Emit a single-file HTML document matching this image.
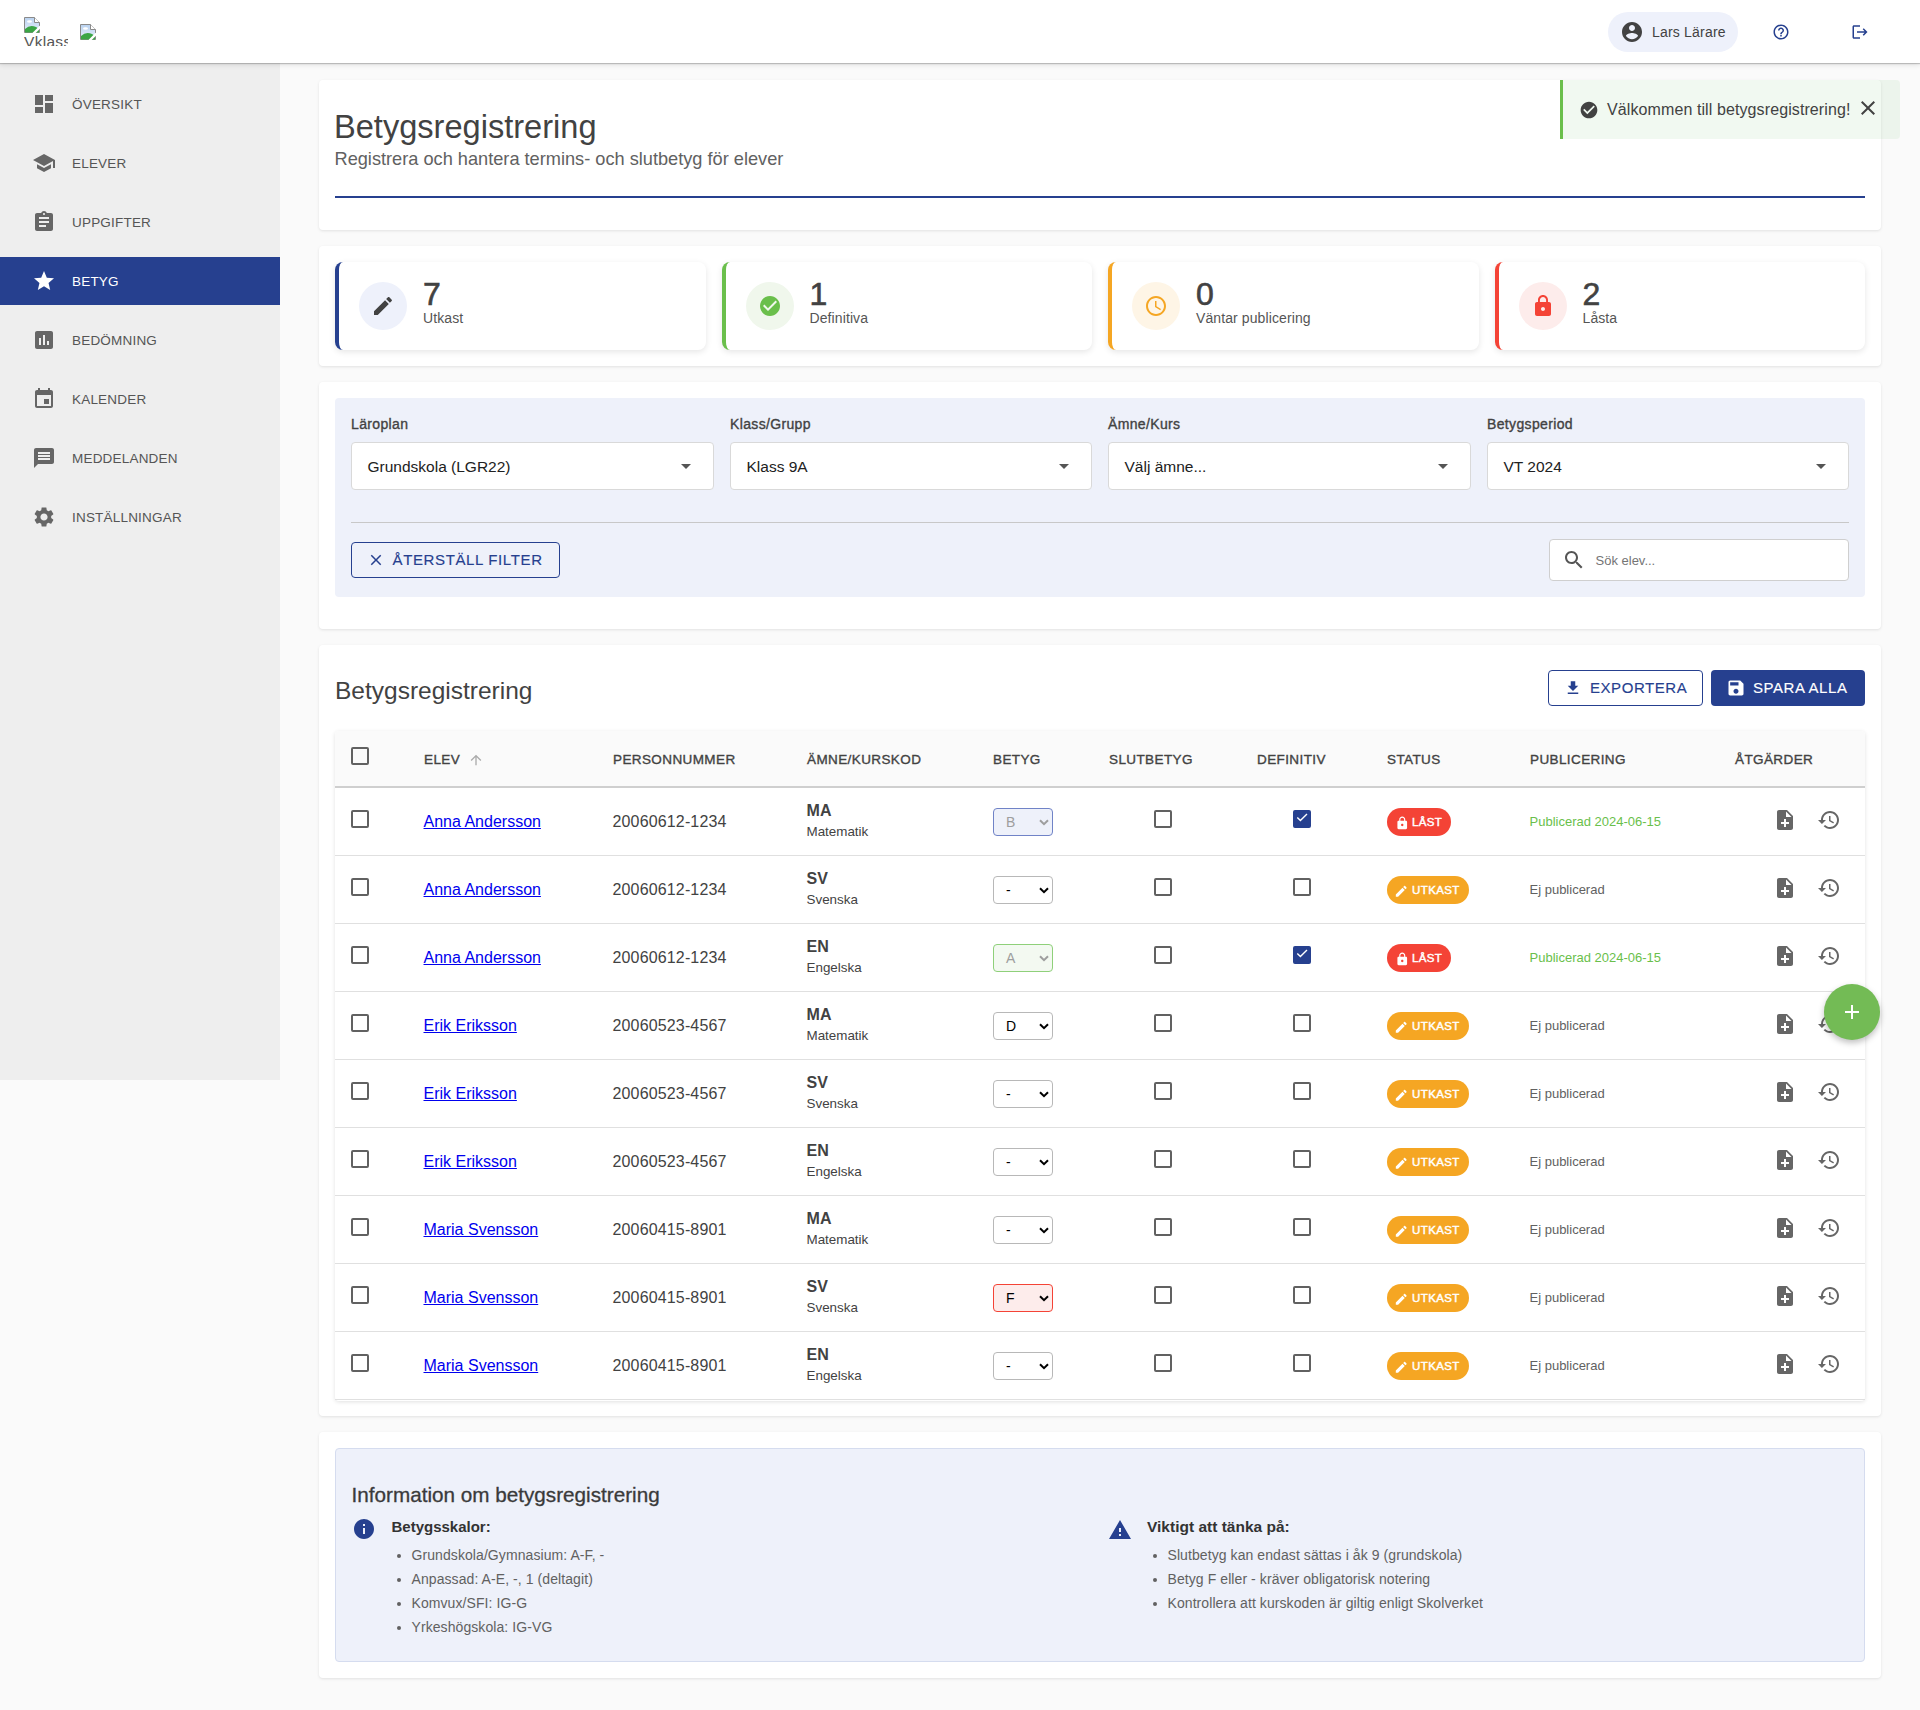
<!DOCTYPE html>
<html lang="sv"><head><meta charset="utf-8"><title>Betygsregistrering</title><style>
*{box-sizing:border-box;margin:0;padding:0}
html,body{width:1920px;height:1710px;overflow:hidden}
body{font-family:"Liberation Sans",sans-serif;background:#fafafa;color:#424242;position:relative}
.abs{position:absolute}
svg{display:block}
.t{position:absolute;white-space:nowrap}
.card{position:absolute;left:319px;width:1562px;background:#fff;border-radius:4px;box-shadow:0 1px 3px rgba(0,0,0,.10)}
.cb{position:absolute;width:18px;height:18px;border:2px solid #616161;border-radius:2px;background:#fff}
.cb.on{background:#26408f;border-color:#26408f}
</style></head><body>
<div class="abs" style="left:0px;top:0px;width:1920px;height:63px;background:#fff;box-shadow:0 1px 1px rgba(0,0,0,.2),0 2px 5px rgba(0,0,0,.1);z-index:1"></div>
<svg class="abs" style="left:24px;top:17px;z-index:2" width="16" height="16" viewBox="0 0 16 16"><defs><linearGradient id="sk" x1="0" y1="0" x2="0" y2="1"><stop offset="0" stop-color="#b9d2f0"/><stop offset="1" stop-color="#e6eefa"/></linearGradient></defs><path d="M0.5 0.5h10l5 5v10h-15z" fill="url(#sk)" stroke="#8a8a8a" stroke-width="1"/><path d="M10.5 0.5v5h5" fill="#fff" stroke="#8a8a8a" stroke-width="1"/><ellipse cx="5.5" cy="4.5" rx="2.5" ry="1.3" fill="#fff"/><path d="M1 15.5 V12 Q6 7 12 10 L15 12 V15.5z" fill="#3aa545"/><path d="M9.5 16.5 L16.5 9.5" stroke="#fff" stroke-width="2.4"/></svg>
<div class="abs" style="left:24px;top:33px;width:44px;height:13px;overflow:hidden;z-index:2"><div class="t" style="left:0;top:1px;font-size:15.5px;line-height:16px;color:#555;letter-spacing:0.3px">Vklass</div></div>
<svg class="abs" style="left:80px;top:24px;z-index:2" width="16" height="16" viewBox="0 0 16 16"><defs><linearGradient id="sk" x1="0" y1="0" x2="0" y2="1"><stop offset="0" stop-color="#b9d2f0"/><stop offset="1" stop-color="#e6eefa"/></linearGradient></defs><path d="M0.5 0.5h10l5 5v10h-15z" fill="url(#sk)" stroke="#8a8a8a" stroke-width="1"/><path d="M10.5 0.5v5h5" fill="#fff" stroke="#8a8a8a" stroke-width="1"/><ellipse cx="5.5" cy="4.5" rx="2.5" ry="1.3" fill="#fff"/><path d="M1 15.5 V12 Q6 7 12 10 L15 12 V15.5z" fill="#3aa545"/><path d="M9.5 16.5 L16.5 9.5" stroke="#fff" stroke-width="2.4"/></svg>
<div class="abs" style="left:1608px;top:12px;width:130px;height:40px;background:#eef1fb;border-radius:20px;z-index:2"></div>
<svg class="abs" style="left:1620px;top:20px;z-index:3" width="24" height="24" viewBox="0 0 24 24"><path fill="#424242" d="M12 2C6.48 2 2 6.48 2 12s4.48 10 10 10 10-4.48 10-10S17.52 2 12 2zm0 3c1.66 0 3 1.34 3 3s-1.34 3-3 3-3-1.34-3-3 1.34-3 3-3zm0 14.2c-2.5 0-4.71-1.28-6-3.22.03-1.99 4-3.08 6-3.08 1.99 0 5.970 1.09 6 3.08-1.29 1.94-3.5 3.22-6 3.22z"/></svg>
<div class="t" style="left:1652px;top:25.00px;font-size:14px;line-height:14px;color:#424242;letter-spacing:0.2px;z-index:3">Lars Lärare</div>
<svg class="abs" style="left:1771.6px;top:22.6px;z-index:3" width="18" height="18" viewBox="0 0 24 24"><path fill="#26408f" d="M11 18h2v-2h-2v2zm1-16C6.48 2 2 6.48 2 12s4.48 10 10 10 10-4.48 10-10S17.52 2 12 2zm0 18c-4.41 0-8-3.59-8-8s3.59-8 8-8 8 3.59 8 8-3.59 8-8 8zm0-14c-2.21 0-4 1.79-4 4h2c0-1.1.9-2 2-2s2 .9 2 2c0 2-3 1.75-3 5h2c0-2.25 3-2.5 3-5 0-2.21-1.79-4-4-4z"/></svg>
<svg class="abs" style="left:1850.7px;top:22.75px;z-index:3" width="18" height="18" viewBox="0 0 24 24"><path fill="#26408f" d="M17 7l-1.41 1.41L18.17 11H8v2h10.17l-2.58 2.58L17 17l5-5zM4 5h8V3H4c-1.1 0-2 .9-2 2v14c0 1.1.9 2 2 2h8v-2H4V5z"/></svg>
<div class="abs" style="left:0px;top:63px;width:280px;height:1017px;background:#eeeeee"></div>
<svg class="abs" style="left:32px;top:92px" width="24" height="24" viewBox="0 0 24 24"><path fill="#666" d="M3 13h8V3H3v10zm0 8h8v-6H3v6zm10 0h8V11h-8v10zm0-18v6h8V3h-8z"/></svg>
<div class="t" style="left:72px;top:98.00px;font-size:13.5px;line-height:13.5px;color:#555;letter-spacing:0.2px">ÖVERSIKT</div>
<svg class="abs" style="left:32px;top:151px" width="24" height="24" viewBox="0 0 24 24"><path fill="#666" d="M5 13.18v4L12 21l7-3.82v-4L12 17l-7-3.82zM12 3L1 9l11 6 9-4.91V17h2V9L12 3z"/></svg>
<div class="t" style="left:72px;top:157.00px;font-size:13.5px;line-height:13.5px;color:#555;letter-spacing:0.2px">ELEVER</div>
<svg class="abs" style="left:32px;top:210px" width="24" height="24" viewBox="0 0 24 24"><path fill="#666" d="M19 3h-4.18C14.4 1.84 13.3 1 12 1c-1.3 0-2.4.84-2.82 2H5c-1.1 0-2 .9-2 2v14c0 1.1.9 2 2 2h14c1.1 0 2-.9 2-2V5c0-1.1-.9-2-2-2zm-7 0c.55 0 1 .45 1 1s-.45 1-1 1-1-.45-1-1 .45-1 1-1zm2 14H7v-2h7v2zm3-4H7v-2h10v2zm0-4H7V7h10v2z"/></svg>
<div class="t" style="left:72px;top:216.00px;font-size:13.5px;line-height:13.5px;color:#555;letter-spacing:0.2px">UPPGIFTER</div>
<div class="abs" style="left:0px;top:257px;width:280px;height:48px;background:#26408f"></div>
<svg class="abs" style="left:32px;top:269px" width="24" height="24" viewBox="0 0 24 24"><path fill="#fff" d="M12 17.27L18.18 21l-1.64-7.03L22 9.24l-7.19-.61L12 2 9.19 8.63 2 9.24l5.46 4.73L5.82 21z"/></svg>
<div class="t" style="left:72px;top:275.00px;font-size:13.5px;line-height:13.5px;color:#fff;letter-spacing:0.2px">BETYG</div>
<svg class="abs" style="left:32px;top:328px" width="24" height="24" viewBox="0 0 24 24"><path fill="#666" d="M19 3H5c-1.1 0-2 .9-2 2v14c0 1.1.9 2 2 2h14c1.1 0 2-.9 2-2V5c0-1.1-.9-2-2-2zM9 17H7v-7h2v7zm4 0h-2V7h2v10zm4 0h-2v-4h2v4z"/></svg>
<div class="t" style="left:72px;top:334.00px;font-size:13.5px;line-height:13.5px;color:#555;letter-spacing:0.2px">BEDÖMNING</div>
<svg class="abs" style="left:32px;top:387px" width="24" height="24" viewBox="0 0 24 24"><path fill="#666" d="M17 12h-5v5h5v-5zM16 1v2H8V1H6v2H5c-1.11 0-1.99.9-1.99 2L3 19c0 1.1.89 2 2 2h14c1.1 0 2-.9 2-2V5c0-1.1-.9-2-2-2h-1V1h-2zm3 18H5V8h14v11z"/></svg>
<div class="t" style="left:72px;top:393.00px;font-size:13.5px;line-height:13.5px;color:#555;letter-spacing:0.2px">KALENDER</div>
<svg class="abs" style="left:32px;top:446px" width="24" height="24" viewBox="0 0 24 24"><path fill="#666" d="M20 2H4c-1.1 0-1.99.9-1.99 2L2 22l4-4h14c1.1 0 2-.9 2-2V4c0-1.1-.9-2-2-2zm-2 12H6v-2h12v2zm0-3H6V9h12v2zm0-3H6V6h12v2z"/></svg>
<div class="t" style="left:72px;top:452.00px;font-size:13.5px;line-height:13.5px;color:#555;letter-spacing:0.2px">MEDDELANDEN</div>
<svg class="abs" style="left:32px;top:505px" width="24" height="24" viewBox="0 0 24 24"><path fill="#666" d="M19.14 12.94c.04-.3.06-.61.06-.94 0-.32-.02-.64-.07-.94l2.03-1.58c.18-.14.23-.41.12-.61l-1.92-3.32c-.12-.22-.37-.29-.59-.22l-2.39.96c-.5-.38-1.03-.7-1.62-.94l-.36-2.54c-.04-.24-.24-.41-.48-.41h-3.84c-.24 0-.43.17-.47.41l-.36 2.54c-.59.24-1.13.57-1.62.94l-2.39-.96c-.22-.08-.47 0-.59.22L2.74 8.87c-.12.21-.08.47.12.61l2.03 1.58c-.05.3-.09.63-.09.94s.02.64.07.94l-2.030 1.58c-.18.14-.23.41-.12.61l1.92 3.32c.12.22.37.29.59.22l2.39-.96c.5.38 1.03.7 1.62.94l.36 2.54c.05.24.24.41.48.41h3.84c.24 0 .44-.17.47-.41l.36-2.54c.59-.24 1.13-.56 1.62-.94l2.39.96c.22.08.47 0 .59-.22l1.92-3.32c.12-.22.07-.47-.12-.61l-2.01-1.58zM12 15.6c-1.98 0-3.6-1.62-3.6-3.6s1.62-3.6 3.6-3.6 3.6 1.62 3.6 3.6-1.62 3.6-3.6 3.6z"/></svg>
<div class="t" style="left:72px;top:511.00px;font-size:13.5px;line-height:13.5px;color:#555;letter-spacing:0.2px">INSTÄLLNINGAR</div>
<div class="card" style="top:80px;height:150px"></div>
<div class="t" style="left:334px;top:111.00px;font-size:32.6px;line-height:32.6px;color:#424242">Betygsregistrering</div>
<div class="t" style="left:334.5px;top:150.00px;font-size:18.2px;line-height:18.2px;color:#616161">Registrera och hantera termins- och slutbetyg för elever</div>
<div class="abs" style="left:335px;top:196px;width:1530px;height:2px;background:#26408f"></div>
<div class="abs" style="left:1560px;top:80px;width:340px;height:59px;background:rgba(76,175,80,.08);border-left:3px solid #6abf4b;border-radius:0 4px 4px 0;z-index:6"></div>
<svg class="abs" style="left:1579px;top:100px;z-index:7" width="20" height="20" viewBox="0 0 24 24"><path fill="#424242" d="M12 2C6.48 2 2 6.48 2 12s4.48 10 10 10 10-4.48 10-10S17.52 2 12 2zm-2 15l-5-5 1.41-1.41L10 14.17l7.59-7.59L19 8l-9 9z"/></svg>
<div class="t" style="left:1607px;top:102.00px;font-size:16px;line-height:16px;color:#424242;letter-spacing:0.1px;z-index:7">Välkommen till betygsregistrering!</div>
<svg class="abs" style="left:1856px;top:96.4px;z-index:7" width="24" height="24" viewBox="0 0 24 24"><path fill="#424242" d="M19 6.41L17.59 5 12 10.59 6.41 5 5 6.41 10.59 12 5 17.59 6.41 19 12 13.41 17.59 19 19 17.59 13.41 12z"/></svg>
<div class="card" style="top:246px;height:120px"></div>
<div class="abs" style="left:335px;top:262px;width:370.5px;height:88px;background:#fff;border-radius:8px;border-left:4px solid #26408f;box-shadow:0 2px 6px rgba(0,0,0,.10)"></div>
<div class="abs" style="left:359px;top:282px;width:48px;height:48px;background:#eef1fb;border-radius:50%"></div>
<svg class="abs" style="left:371px;top:294px" width="24" height="24" viewBox="0 0 24 24"><path fill="#424242" d="M3 17.25V21h3.75L17.81 9.94l-3.75-3.75L3 17.25zM20.71 7.04c.39-.39.39-1.02 0-1.41l-2.34-2.34c-.39-.39-1.02-.39-1.41 0l-1.83 1.830 3.75 3.75 1.83-1.83z"/></svg>
<div class="t" style="left:423px;top:278.00px;font-size:32px;line-height:32px;color:#424242;-webkit-text-stroke:0.6px #424242">7</div>
<div class="t" style="left:423px;top:311.00px;font-size:14px;line-height:14px;color:#555;letter-spacing:0.1px">Utkast</div>
<div class="abs" style="left:721.5px;top:262px;width:370.5px;height:88px;background:#fff;border-radius:8px;border-left:4px solid #6abf4b;box-shadow:0 2px 6px rgba(0,0,0,.10)"></div>
<div class="abs" style="left:745.5px;top:282px;width:48px;height:48px;background:#f0f7ec;border-radius:50%"></div>
<svg class="abs" style="left:757.5px;top:294px" width="24" height="24" viewBox="0 0 24 24"><path fill="#6abf4b" d="M12 2C6.48 2 2 6.48 2 12s4.48 10 10 10 10-4.48 10-10S17.52 2 12 2zm-2 15l-5-5 1.41-1.41L10 14.17l7.59-7.59L19 8l-9 9z"/></svg>
<div class="t" style="left:809.5px;top:278.00px;font-size:32px;line-height:32px;color:#424242;-webkit-text-stroke:0.6px #424242">1</div>
<div class="t" style="left:809.5px;top:311.00px;font-size:14px;line-height:14px;color:#555;letter-spacing:0.1px">Definitiva</div>
<div class="abs" style="left:1108px;top:262px;width:370.5px;height:88px;background:#fff;border-radius:8px;border-left:4px solid #f5a623;box-shadow:0 2px 6px rgba(0,0,0,.10)"></div>
<div class="abs" style="left:1132px;top:282px;width:48px;height:48px;background:#fef5e6;border-radius:50%"></div>
<svg class="abs" style="left:1144px;top:294px" width="24" height="24" viewBox="0 0 24 24"><path fill="#f5a623" d="M11.99 2C6.47 2 2 6.48 2 12s4.47 10 9.99 10C17.52 22 22 17.52 22 12S17.52 2 11.99 2zM12 20c-4.42 0-8-3.58-8-8s3.58-8 8-8 8 3.58 8 8-3.58 8-8 8zm.5-13H11v6l5.25 3.15.75-1.23-4.5-2.67z"/></svg>
<div class="t" style="left:1196px;top:278.00px;font-size:32px;line-height:32px;color:#424242;-webkit-text-stroke:0.6px #424242">0</div>
<div class="t" style="left:1196px;top:311.00px;font-size:14px;line-height:14px;color:#555;letter-spacing:0.1px">Väntar publicering</div>
<div class="abs" style="left:1494.5px;top:262px;width:370.5px;height:88px;background:#fff;border-radius:8px;border-left:4px solid #f44336;box-shadow:0 2px 6px rgba(0,0,0,.10)"></div>
<div class="abs" style="left:1518.5px;top:282px;width:48px;height:48px;background:#fdeceb;border-radius:50%"></div>
<svg class="abs" style="left:1530.5px;top:294px" width="24" height="24" viewBox="0 0 24 24"><path fill="#f44336" d="M18 8h-1V6c0-2.76-2.24-5-5-5S7 3.24 7 6v2H6c-1.1 0-2 .9-2 2v10c0 1.1.9 2 2 2h12c1.1 0 2-.9 2-2V10c0-1.1-.9-2-2-2zm-6 9c-1.1 0-2-.9-2-2s.9-2 2-2 2 .9 2 2-.9 2-2 2zm3.1-9H8.9V6c0-1.71 1.39-3.1 3.1-3.1 1.71 0 3.1 1.39 3.1 3.1v2z"/></svg>
<div class="t" style="left:1582.5px;top:278.00px;font-size:32px;line-height:32px;color:#424242;-webkit-text-stroke:0.6px #424242">2</div>
<div class="t" style="left:1582.5px;top:311.00px;font-size:14px;line-height:14px;color:#555;letter-spacing:0.1px">Låsta</div>
<div class="card" style="top:382px;height:247px"></div>
<div class="abs" style="left:335px;top:398px;width:1530px;height:199px;background:#eef1fa;border-radius:4px"></div>
<div class="t" style="left:351px;top:417.00px;font-size:14px;line-height:14px;color:#424242;letter-spacing:0.35px;-webkit-text-stroke:0.35px #424242">Läroplan</div>
<div class="abs" style="left:351px;top:442px;width:363px;height:48px;background:#fff;border:1px solid #d9d9d9;border-radius:4px"></div>
<div class="t" style="left:367.5px;top:459.00px;font-size:15.5px;line-height:15.5px;color:#212121">Grundskola (LGR22)</div>
<svg class="abs" style="left:674px;top:454px" width="24" height="24" viewBox="0 0 24 24"><path fill="#555" d="M7 10l5 5 5-5z"/></svg>
<div class="t" style="left:730px;top:417.00px;font-size:14px;line-height:14px;color:#424242;letter-spacing:0.35px;-webkit-text-stroke:0.35px #424242">Klass/Grupp</div>
<div class="abs" style="left:730px;top:442px;width:362px;height:48px;background:#fff;border:1px solid #d9d9d9;border-radius:4px"></div>
<div class="t" style="left:746.5px;top:459.00px;font-size:15.5px;line-height:15.5px;color:#212121">Klass 9A</div>
<svg class="abs" style="left:1052px;top:454px" width="24" height="24" viewBox="0 0 24 24"><path fill="#555" d="M7 10l5 5 5-5z"/></svg>
<div class="t" style="left:1108px;top:417.00px;font-size:14px;line-height:14px;color:#424242;letter-spacing:0.35px;-webkit-text-stroke:0.35px #424242">Ämne/Kurs</div>
<div class="abs" style="left:1108px;top:442px;width:363px;height:48px;background:#fff;border:1px solid #d9d9d9;border-radius:4px"></div>
<div class="t" style="left:1124.5px;top:459.00px;font-size:15.5px;line-height:15.5px;color:#212121">Välj ämne...</div>
<svg class="abs" style="left:1431px;top:454px" width="24" height="24" viewBox="0 0 24 24"><path fill="#555" d="M7 10l5 5 5-5z"/></svg>
<div class="t" style="left:1487px;top:417.00px;font-size:14px;line-height:14px;color:#424242;letter-spacing:0.35px;-webkit-text-stroke:0.35px #424242">Betygsperiod</div>
<div class="abs" style="left:1487px;top:442px;width:362px;height:48px;background:#fff;border:1px solid #d9d9d9;border-radius:4px"></div>
<div class="t" style="left:1503.5px;top:459.00px;font-size:15.5px;line-height:15.5px;color:#212121">VT 2024</div>
<svg class="abs" style="left:1809px;top:454px" width="24" height="24" viewBox="0 0 24 24"><path fill="#555" d="M7 10l5 5 5-5z"/></svg>
<div class="abs" style="left:351px;top:522px;width:1498px;height:1px;background:#c8c8c8"></div>
<div class="abs" style="left:351px;top:542px;width:209px;height:36px;border:1px solid #26408f;border-radius:4px"></div>
<svg class="abs" style="left:367px;top:551px" width="18" height="18" viewBox="0 0 24 24"><path fill="#26408f" d="M19 6.41L17.59 5 12 10.59 6.41 5 5 6.41 10.59 12 5 17.59 6.41 19 12 13.41 17.59 19 19 17.59 13.41 12z"/></svg>
<div class="t" style="left:392.5px;top:552.00px;font-size:15px;line-height:15px;color:#26408f;letter-spacing:0.63px;-webkit-text-stroke:0.15px #26408f">ÅTERSTÄLL FILTER</div>
<div class="abs" style="left:1549px;top:539px;width:300px;height:42px;background:#fff;border:1px solid #cfcfcf;border-radius:4px"></div>
<svg class="abs" style="left:1562px;top:548px" width="24" height="24" viewBox="0 0 24 24"><path fill="#555" d="M15.5 14h-.79l-.28-.27C15.41 12.59 16 11.11 16 9.5 16 5.91 13.09 3 9.5 3S3 5.91 3 9.5 5.91 16 9.5 16c1.61 0 3.09-.59 4.23-1.57l.27.28v.79l5 4.99L20.49 19l-4.99-5zm-6 0C7.01 14 5 11.99 5 9.5S7.01 5 9.5 5 14 7.01 14 9.5 11.990 14 9.5 14z"/></svg>
<div class="t" style="left:1595.5px;top:554.00px;font-size:13px;line-height:13px;color:#757575">Sök elev...</div>
<div class="card" style="top:645px;height:771px"></div>
<div class="t" style="left:335px;top:679.00px;font-size:24.5px;line-height:24.5px;color:#424242">Betygsregistrering</div>
<div class="abs" style="left:1548px;top:670px;width:155px;height:36px;border:1px solid #26408f;border-radius:4px"></div>
<svg class="abs" style="left:1564px;top:679px" width="18" height="18" viewBox="0 0 24 24"><path fill="#26408f" d="M19 9h-4V3H9v6H5l7 7 7-7zM5 18v2h14v-2H5z"/></svg>
<div class="t" style="left:1590px;top:680.00px;font-size:15px;line-height:15px;color:#26408f;letter-spacing:0.55px;-webkit-text-stroke:0.15px #26408f">EXPORTERA</div>
<div class="abs" style="left:1711px;top:670px;width:154px;height:36px;background:#26408f;border-radius:4px"></div>
<svg class="abs" style="left:1726px;top:678px" width="20" height="20" viewBox="0 0 24 24"><path fill="#fff" d="M17 3H5c-1.11 0-2 .9-2 2v14c0 1.1.89 2 2 2h14c1.1 0 2-.9 2-2V7l-4-4zm-5 16c-1.66 0-3-1.34-3-3s1.34-3 3-3 3 1.34 3 3-1.34 3-3 3zm3-10H5V5h10v4z"/></svg>
<div class="t" style="left:1753px;top:680.00px;font-size:15px;line-height:15px;color:#fff;letter-spacing:0.55px;-webkit-text-stroke:0.15px #fff">SPARA ALLA</div>
<div class="abs" style="left:335px;top:731px;width:1530px;height:670px;background:#fff;border-radius:4px;box-shadow:0 1px 4px rgba(0,0,0,.12)"></div>
<div class="abs" style="left:335px;top:731px;width:1530px;height:57px;background:#fafafa;border-bottom:2px solid #cfcfcf;border-radius:4px 4px 0 0"></div>
<div class="cb" style="left:351px;top:747px;background:transparent"></div>
<div class="t" style="left:424px;top:753.00px;font-size:13.5px;line-height:13.5px;color:#424242;letter-spacing:0.4px;-webkit-text-stroke:0.35px #424242">ELEV</div>
<div class="t" style="left:613px;top:753.00px;font-size:13.5px;line-height:13.5px;color:#424242;letter-spacing:0.4px;-webkit-text-stroke:0.35px #424242">PERSONNUMMER</div>
<div class="t" style="left:807px;top:753.00px;font-size:13.5px;line-height:13.5px;color:#424242;letter-spacing:0.4px;-webkit-text-stroke:0.35px #424242">ÄMNE/KURSKOD</div>
<div class="t" style="left:993px;top:753.00px;font-size:13.5px;line-height:13.5px;color:#424242;letter-spacing:0.4px;-webkit-text-stroke:0.35px #424242">BETYG</div>
<div class="t" style="left:1109px;top:753.00px;font-size:13.5px;line-height:13.5px;color:#424242;letter-spacing:0.4px;-webkit-text-stroke:0.35px #424242">SLUTBETYG</div>
<div class="t" style="left:1257px;top:753.00px;font-size:13.5px;line-height:13.5px;color:#424242;letter-spacing:0.4px;-webkit-text-stroke:0.35px #424242">DEFINITIV</div>
<div class="t" style="left:1387px;top:753.00px;font-size:13.5px;line-height:13.5px;color:#424242;letter-spacing:0.4px;-webkit-text-stroke:0.35px #424242">STATUS</div>
<div class="t" style="left:1530px;top:753.00px;font-size:13.5px;line-height:13.5px;color:#424242;letter-spacing:0.4px;-webkit-text-stroke:0.35px #424242">PUBLICERING</div>
<div class="t" style="left:1735px;top:753.00px;font-size:13.5px;line-height:13.5px;color:#424242;letter-spacing:0.4px;-webkit-text-stroke:0.35px #424242">ÅTGÄRDER</div>
<svg class="abs" style="left:468px;top:752px" width="16" height="16" viewBox="0 0 24 24"><path fill="#ababab" d="M4 12l1.41 1.41L11 7.83V20h2V7.83l5.58 5.59L20 12l-8-8-8 8z"/></svg>
<div class="abs" style="left:335px;top:855px;width:1530px;height:1px;background:#e0e0e0"></div>
<div class="cb" style="left:351px;top:810px"></div>
<div class="t" style="left:423.5px;top:814.00px;font-size:16px;line-height:16px;color:#0000ee;text-decoration:underline">Anna Andersson</div>
<div class="t" style="left:612.5px;top:814.00px;font-size:16px;line-height:16px;color:#424242;letter-spacing:0.15px">20060612-1234</div>
<div class="t" style="left:806.5px;top:803.00px;font-size:16px;line-height:16px;color:#424242;font-weight:bold;letter-spacing:0.1px">MA</div>
<div class="t" style="left:806.5px;top:825.00px;font-size:13.4px;line-height:13.4px;color:#424242">Matematik</div>
<div class="abs" style="left:993px;top:808px;width:60px;height:28px;background:#eef1fa;border:1px solid #7083c7;border-radius:4px"></div>
<div class="t" style="left:1006px;top:815.00px;font-size:14px;line-height:14px;color:#9e9e9e">B</div>
<svg class="abs" style="left:1039px;top:819px" width="10" height="7" viewBox="0 0 10 7"><path d="M1 1.2 L5 5.2 L9 1.2" fill="none" stroke="#9e9e9e" stroke-width="2"/></svg>
<div class="cb" style="left:1154px;top:810px"></div>
<div class="cb on" style="left:1293px;top:810px"><svg class="abs" style="left:1px;top:1px" width="12" height="12" viewBox="0 0 12 12"><path d="M1.3 4.5 L4.4 7.6 L11 1" fill="none" stroke="#fff" stroke-width="1.4"/></svg></div>
<div class="abs" style="left:1387px;top:808px;width:64px;height:28px;background:#f44336;border-radius:14px"></div>
<svg class="abs" style="left:1394.5px;top:815.5px" width="14.5" height="14.5" viewBox="0 0 24 24"><path fill="#fff" d="M18 8h-1V6c0-2.76-2.24-5-5-5S7 3.24 7 6v2H6c-1.1 0-2 .9-2 2v10c0 1.1.9 2 2 2h12c1.1 0 2-.9 2-2V10c0-1.1-.9-2-2-2zm-6 9c-1.1 0-2-.9-2-2s.9-2 2-2 2 .9 2 2-.9 2-2 2zm3.1-9H8.9V6c0-1.71 1.39-3.1 3.1-3.1 1.71 0 3.1 1.39 3.1 3.1v2z"/></svg>
<div class="t" style="left:1412px;top:817.00px;font-size:11.5px;line-height:11.5px;color:#fff;letter-spacing:0.35px;-webkit-text-stroke:0.45px #fff">LÅST</div>
<div class="t" style="left:1529.5px;top:815.00px;font-size:13px;line-height:13px;color:#6abf4b">Publicerad 2024-06-15</div>
<svg class="abs" style="left:1773px;top:808px" width="24" height="24" viewBox="0 0 24 24"><path fill="#666" d="M14 2H6c-1.1 0-1.99.9-1.99 2L4 20c0 1.1.89 2 1.99 2H18c1.1 0 2-.9 2-2V8l-6-6zm2 14h-3v3h-2v-3H8v-2h3v-3h2v3h3v2zm-3-7V3.5L18.5 9H13z"/></svg>
<svg class="abs" style="left:1817px;top:808px" width="24" height="24" viewBox="0 0 24 24"><path fill="#666" d="M13 3c-4.97 0-9 4.03-9 9H1l3.89 3.89.07.14L9 12H6c0-3.870 3.13-7 7-7s7 3.13 7 7-3.13 7-7 7c-1.93 0-3.68-.79-4.94-2.06l-1.42 1.42C8.27 19.99 10.51 21 13 21c4.97 0 9-4.03 9-9s-4.03-9-9-9zm-1 5v5l4.28 2.54.72-1.21-3.5-2.08V8H12z"/></svg>
<div class="abs" style="left:335px;top:923px;width:1530px;height:1px;background:#e0e0e0"></div>
<div class="cb" style="left:351px;top:878px"></div>
<div class="t" style="left:423.5px;top:882.00px;font-size:16px;line-height:16px;color:#0000ee;text-decoration:underline">Anna Andersson</div>
<div class="t" style="left:612.5px;top:882.00px;font-size:16px;line-height:16px;color:#424242;letter-spacing:0.15px">20060612-1234</div>
<div class="t" style="left:806.5px;top:871.00px;font-size:16px;line-height:16px;color:#424242;font-weight:bold;letter-spacing:0.1px">SV</div>
<div class="t" style="left:806.5px;top:893.00px;font-size:13.4px;line-height:13.4px;color:#424242">Svenska</div>
<div class="abs" style="left:993px;top:876px;width:60px;height:28px;background:#fff;border:1px solid #b8b8b8;border-radius:4px"></div>
<div class="t" style="left:1006px;top:883.00px;font-size:14px;line-height:14px;color:#000">-</div>
<svg class="abs" style="left:1039px;top:887px" width="10" height="7" viewBox="0 0 10 7"><path d="M1 1.2 L5 5.2 L9 1.2" fill="none" stroke="#000" stroke-width="2"/></svg>
<div class="cb" style="left:1154px;top:878px"></div>
<div class="cb" style="left:1293px;top:878px"></div>
<div class="abs" style="left:1387px;top:876px;width:82px;height:28px;background:#f5a623;border-radius:14px"></div>
<svg class="abs" style="left:1394.3px;top:884.1px" width="14.5" height="14.5" viewBox="0 0 24 24"><path fill="#fff" d="M3 17.25V21h3.75L17.81 9.94l-3.75-3.75L3 17.25zM20.71 7.04c.39-.39.39-1.02 0-1.41l-2.34-2.34c-.39-.39-1.02-.39-1.41 0l-1.83 1.830 3.75 3.75 1.83-1.83z"/></svg>
<div class="t" style="left:1412px;top:885.00px;font-size:11.5px;line-height:11.5px;color:#fff;letter-spacing:0.4px;-webkit-text-stroke:0.45px #fff">UTKAST</div>
<div class="t" style="left:1529.5px;top:883.00px;font-size:13px;line-height:13px;color:#616161">Ej publicerad</div>
<svg class="abs" style="left:1773px;top:876px" width="24" height="24" viewBox="0 0 24 24"><path fill="#666" d="M14 2H6c-1.1 0-1.99.9-1.99 2L4 20c0 1.1.89 2 1.99 2H18c1.1 0 2-.9 2-2V8l-6-6zm2 14h-3v3h-2v-3H8v-2h3v-3h2v3h3v2zm-3-7V3.5L18.5 9H13z"/></svg>
<svg class="abs" style="left:1817px;top:876px" width="24" height="24" viewBox="0 0 24 24"><path fill="#666" d="M13 3c-4.97 0-9 4.03-9 9H1l3.89 3.89.07.14L9 12H6c0-3.870 3.13-7 7-7s7 3.13 7 7-3.13 7-7 7c-1.93 0-3.68-.79-4.94-2.06l-1.42 1.42C8.27 19.99 10.51 21 13 21c4.97 0 9-4.03 9-9s-4.03-9-9-9zm-1 5v5l4.28 2.54.72-1.21-3.5-2.08V8H12z"/></svg>
<div class="abs" style="left:335px;top:991px;width:1530px;height:1px;background:#e0e0e0"></div>
<div class="cb" style="left:351px;top:946px"></div>
<div class="t" style="left:423.5px;top:950.00px;font-size:16px;line-height:16px;color:#0000ee;text-decoration:underline">Anna Andersson</div>
<div class="t" style="left:612.5px;top:950.00px;font-size:16px;line-height:16px;color:#424242;letter-spacing:0.15px">20060612-1234</div>
<div class="t" style="left:806.5px;top:939.00px;font-size:16px;line-height:16px;color:#424242;font-weight:bold;letter-spacing:0.1px">EN</div>
<div class="t" style="left:806.5px;top:961.00px;font-size:13.4px;line-height:13.4px;color:#424242">Engelska</div>
<div class="abs" style="left:993px;top:944px;width:60px;height:28px;background:#f3f9f1;border:1px solid #8fd07a;border-radius:4px"></div>
<div class="t" style="left:1006px;top:951.00px;font-size:14px;line-height:14px;color:#9e9e9e">A</div>
<svg class="abs" style="left:1039px;top:955px" width="10" height="7" viewBox="0 0 10 7"><path d="M1 1.2 L5 5.2 L9 1.2" fill="none" stroke="#9e9e9e" stroke-width="2"/></svg>
<div class="cb" style="left:1154px;top:946px"></div>
<div class="cb on" style="left:1293px;top:946px"><svg class="abs" style="left:1px;top:1px" width="12" height="12" viewBox="0 0 12 12"><path d="M1.3 4.5 L4.4 7.6 L11 1" fill="none" stroke="#fff" stroke-width="1.4"/></svg></div>
<div class="abs" style="left:1387px;top:944px;width:64px;height:28px;background:#f44336;border-radius:14px"></div>
<svg class="abs" style="left:1394.5px;top:951.5px" width="14.5" height="14.5" viewBox="0 0 24 24"><path fill="#fff" d="M18 8h-1V6c0-2.76-2.24-5-5-5S7 3.24 7 6v2H6c-1.1 0-2 .9-2 2v10c0 1.1.9 2 2 2h12c1.1 0 2-.9 2-2V10c0-1.1-.9-2-2-2zm-6 9c-1.1 0-2-.9-2-2s.9-2 2-2 2 .9 2 2-.9 2-2 2zm3.1-9H8.9V6c0-1.71 1.39-3.1 3.1-3.1 1.71 0 3.1 1.39 3.1 3.1v2z"/></svg>
<div class="t" style="left:1412px;top:953.00px;font-size:11.5px;line-height:11.5px;color:#fff;letter-spacing:0.35px;-webkit-text-stroke:0.45px #fff">LÅST</div>
<div class="t" style="left:1529.5px;top:951.00px;font-size:13px;line-height:13px;color:#6abf4b">Publicerad 2024-06-15</div>
<svg class="abs" style="left:1773px;top:944px" width="24" height="24" viewBox="0 0 24 24"><path fill="#666" d="M14 2H6c-1.1 0-1.99.9-1.99 2L4 20c0 1.1.89 2 1.99 2H18c1.1 0 2-.9 2-2V8l-6-6zm2 14h-3v3h-2v-3H8v-2h3v-3h2v3h3v2zm-3-7V3.5L18.5 9H13z"/></svg>
<svg class="abs" style="left:1817px;top:944px" width="24" height="24" viewBox="0 0 24 24"><path fill="#666" d="M13 3c-4.97 0-9 4.03-9 9H1l3.89 3.89.07.14L9 12H6c0-3.870 3.13-7 7-7s7 3.13 7 7-3.13 7-7 7c-1.93 0-3.68-.79-4.94-2.06l-1.42 1.42C8.27 19.99 10.51 21 13 21c4.97 0 9-4.03 9-9s-4.03-9-9-9zm-1 5v5l4.28 2.54.72-1.21-3.5-2.08V8H12z"/></svg>
<div class="abs" style="left:335px;top:1059px;width:1530px;height:1px;background:#e0e0e0"></div>
<div class="cb" style="left:351px;top:1014px"></div>
<div class="t" style="left:423.5px;top:1018.00px;font-size:16px;line-height:16px;color:#0000ee;text-decoration:underline">Erik Eriksson</div>
<div class="t" style="left:612.5px;top:1018.00px;font-size:16px;line-height:16px;color:#424242;letter-spacing:0.15px">20060523-4567</div>
<div class="t" style="left:806.5px;top:1007.00px;font-size:16px;line-height:16px;color:#424242;font-weight:bold;letter-spacing:0.1px">MA</div>
<div class="t" style="left:806.5px;top:1029.00px;font-size:13.4px;line-height:13.4px;color:#424242">Matematik</div>
<div class="abs" style="left:993px;top:1012px;width:60px;height:28px;background:#fff;border:1px solid #b8b8b8;border-radius:4px"></div>
<div class="t" style="left:1006px;top:1019.00px;font-size:14px;line-height:14px;color:#000">D</div>
<svg class="abs" style="left:1039px;top:1023px" width="10" height="7" viewBox="0 0 10 7"><path d="M1 1.2 L5 5.2 L9 1.2" fill="none" stroke="#000" stroke-width="2"/></svg>
<div class="cb" style="left:1154px;top:1014px"></div>
<div class="cb" style="left:1293px;top:1014px"></div>
<div class="abs" style="left:1387px;top:1012px;width:82px;height:28px;background:#f5a623;border-radius:14px"></div>
<svg class="abs" style="left:1394.3px;top:1020.1px" width="14.5" height="14.5" viewBox="0 0 24 24"><path fill="#fff" d="M3 17.25V21h3.75L17.81 9.94l-3.75-3.75L3 17.25zM20.71 7.04c.39-.39.39-1.02 0-1.41l-2.34-2.34c-.39-.39-1.02-.39-1.41 0l-1.83 1.830 3.75 3.75 1.83-1.83z"/></svg>
<div class="t" style="left:1412px;top:1021.00px;font-size:11.5px;line-height:11.5px;color:#fff;letter-spacing:0.4px;-webkit-text-stroke:0.45px #fff">UTKAST</div>
<div class="t" style="left:1529.5px;top:1019.00px;font-size:13px;line-height:13px;color:#616161">Ej publicerad</div>
<svg class="abs" style="left:1773px;top:1012px" width="24" height="24" viewBox="0 0 24 24"><path fill="#666" d="M14 2H6c-1.1 0-1.99.9-1.99 2L4 20c0 1.1.89 2 1.99 2H18c1.1 0 2-.9 2-2V8l-6-6zm2 14h-3v3h-2v-3H8v-2h3v-3h2v3h3v2zm-3-7V3.5L18.5 9H13z"/></svg>
<svg class="abs" style="left:1817px;top:1012px" width="24" height="24" viewBox="0 0 24 24"><path fill="#666" d="M13 3c-4.97 0-9 4.03-9 9H1l3.89 3.89.07.14L9 12H6c0-3.870 3.13-7 7-7s7 3.13 7 7-3.13 7-7 7c-1.93 0-3.68-.79-4.94-2.06l-1.42 1.42C8.27 19.99 10.51 21 13 21c4.97 0 9-4.03 9-9s-4.03-9-9-9zm-1 5v5l4.28 2.54.72-1.21-3.5-2.08V8H12z"/></svg>
<div class="abs" style="left:335px;top:1127px;width:1530px;height:1px;background:#e0e0e0"></div>
<div class="cb" style="left:351px;top:1082px"></div>
<div class="t" style="left:423.5px;top:1086.00px;font-size:16px;line-height:16px;color:#0000ee;text-decoration:underline">Erik Eriksson</div>
<div class="t" style="left:612.5px;top:1086.00px;font-size:16px;line-height:16px;color:#424242;letter-spacing:0.15px">20060523-4567</div>
<div class="t" style="left:806.5px;top:1075.00px;font-size:16px;line-height:16px;color:#424242;font-weight:bold;letter-spacing:0.1px">SV</div>
<div class="t" style="left:806.5px;top:1097.00px;font-size:13.4px;line-height:13.4px;color:#424242">Svenska</div>
<div class="abs" style="left:993px;top:1080px;width:60px;height:28px;background:#fff;border:1px solid #b8b8b8;border-radius:4px"></div>
<div class="t" style="left:1006px;top:1087.00px;font-size:14px;line-height:14px;color:#000">-</div>
<svg class="abs" style="left:1039px;top:1091px" width="10" height="7" viewBox="0 0 10 7"><path d="M1 1.2 L5 5.2 L9 1.2" fill="none" stroke="#000" stroke-width="2"/></svg>
<div class="cb" style="left:1154px;top:1082px"></div>
<div class="cb" style="left:1293px;top:1082px"></div>
<div class="abs" style="left:1387px;top:1080px;width:82px;height:28px;background:#f5a623;border-radius:14px"></div>
<svg class="abs" style="left:1394.3px;top:1088.1px" width="14.5" height="14.5" viewBox="0 0 24 24"><path fill="#fff" d="M3 17.25V21h3.75L17.81 9.94l-3.75-3.75L3 17.25zM20.71 7.04c.39-.39.39-1.02 0-1.41l-2.34-2.34c-.39-.39-1.02-.39-1.41 0l-1.83 1.830 3.75 3.75 1.83-1.83z"/></svg>
<div class="t" style="left:1412px;top:1089.00px;font-size:11.5px;line-height:11.5px;color:#fff;letter-spacing:0.4px;-webkit-text-stroke:0.45px #fff">UTKAST</div>
<div class="t" style="left:1529.5px;top:1087.00px;font-size:13px;line-height:13px;color:#616161">Ej publicerad</div>
<svg class="abs" style="left:1773px;top:1080px" width="24" height="24" viewBox="0 0 24 24"><path fill="#666" d="M14 2H6c-1.1 0-1.99.9-1.99 2L4 20c0 1.1.89 2 1.99 2H18c1.1 0 2-.9 2-2V8l-6-6zm2 14h-3v3h-2v-3H8v-2h3v-3h2v3h3v2zm-3-7V3.5L18.5 9H13z"/></svg>
<svg class="abs" style="left:1817px;top:1080px" width="24" height="24" viewBox="0 0 24 24"><path fill="#666" d="M13 3c-4.97 0-9 4.03-9 9H1l3.89 3.89.07.14L9 12H6c0-3.870 3.13-7 7-7s7 3.13 7 7-3.13 7-7 7c-1.93 0-3.68-.79-4.94-2.06l-1.42 1.42C8.27 19.99 10.51 21 13 21c4.97 0 9-4.03 9-9s-4.03-9-9-9zm-1 5v5l4.28 2.54.72-1.21-3.5-2.08V8H12z"/></svg>
<div class="abs" style="left:335px;top:1195px;width:1530px;height:1px;background:#e0e0e0"></div>
<div class="cb" style="left:351px;top:1150px"></div>
<div class="t" style="left:423.5px;top:1154.00px;font-size:16px;line-height:16px;color:#0000ee;text-decoration:underline">Erik Eriksson</div>
<div class="t" style="left:612.5px;top:1154.00px;font-size:16px;line-height:16px;color:#424242;letter-spacing:0.15px">20060523-4567</div>
<div class="t" style="left:806.5px;top:1143.00px;font-size:16px;line-height:16px;color:#424242;font-weight:bold;letter-spacing:0.1px">EN</div>
<div class="t" style="left:806.5px;top:1165.00px;font-size:13.4px;line-height:13.4px;color:#424242">Engelska</div>
<div class="abs" style="left:993px;top:1148px;width:60px;height:28px;background:#fff;border:1px solid #b8b8b8;border-radius:4px"></div>
<div class="t" style="left:1006px;top:1155.00px;font-size:14px;line-height:14px;color:#000">-</div>
<svg class="abs" style="left:1039px;top:1159px" width="10" height="7" viewBox="0 0 10 7"><path d="M1 1.2 L5 5.2 L9 1.2" fill="none" stroke="#000" stroke-width="2"/></svg>
<div class="cb" style="left:1154px;top:1150px"></div>
<div class="cb" style="left:1293px;top:1150px"></div>
<div class="abs" style="left:1387px;top:1148px;width:82px;height:28px;background:#f5a623;border-radius:14px"></div>
<svg class="abs" style="left:1394.3px;top:1156.1px" width="14.5" height="14.5" viewBox="0 0 24 24"><path fill="#fff" d="M3 17.25V21h3.75L17.81 9.94l-3.75-3.75L3 17.25zM20.71 7.04c.39-.39.39-1.02 0-1.41l-2.34-2.34c-.39-.39-1.02-.39-1.41 0l-1.83 1.830 3.75 3.75 1.83-1.83z"/></svg>
<div class="t" style="left:1412px;top:1157.00px;font-size:11.5px;line-height:11.5px;color:#fff;letter-spacing:0.4px;-webkit-text-stroke:0.45px #fff">UTKAST</div>
<div class="t" style="left:1529.5px;top:1155.00px;font-size:13px;line-height:13px;color:#616161">Ej publicerad</div>
<svg class="abs" style="left:1773px;top:1148px" width="24" height="24" viewBox="0 0 24 24"><path fill="#666" d="M14 2H6c-1.1 0-1.99.9-1.99 2L4 20c0 1.1.89 2 1.99 2H18c1.1 0 2-.9 2-2V8l-6-6zm2 14h-3v3h-2v-3H8v-2h3v-3h2v3h3v2zm-3-7V3.5L18.5 9H13z"/></svg>
<svg class="abs" style="left:1817px;top:1148px" width="24" height="24" viewBox="0 0 24 24"><path fill="#666" d="M13 3c-4.97 0-9 4.03-9 9H1l3.89 3.89.07.14L9 12H6c0-3.870 3.13-7 7-7s7 3.13 7 7-3.13 7-7 7c-1.93 0-3.68-.79-4.94-2.06l-1.42 1.42C8.27 19.99 10.51 21 13 21c4.97 0 9-4.03 9-9s-4.03-9-9-9zm-1 5v5l4.28 2.54.72-1.21-3.5-2.08V8H12z"/></svg>
<div class="abs" style="left:335px;top:1263px;width:1530px;height:1px;background:#e0e0e0"></div>
<div class="cb" style="left:351px;top:1218px"></div>
<div class="t" style="left:423.5px;top:1222.00px;font-size:16px;line-height:16px;color:#0000ee;text-decoration:underline">Maria Svensson</div>
<div class="t" style="left:612.5px;top:1222.00px;font-size:16px;line-height:16px;color:#424242;letter-spacing:0.15px">20060415-8901</div>
<div class="t" style="left:806.5px;top:1211.00px;font-size:16px;line-height:16px;color:#424242;font-weight:bold;letter-spacing:0.1px">MA</div>
<div class="t" style="left:806.5px;top:1233.00px;font-size:13.4px;line-height:13.4px;color:#424242">Matematik</div>
<div class="abs" style="left:993px;top:1216px;width:60px;height:28px;background:#fff;border:1px solid #b8b8b8;border-radius:4px"></div>
<div class="t" style="left:1006px;top:1223.00px;font-size:14px;line-height:14px;color:#000">-</div>
<svg class="abs" style="left:1039px;top:1227px" width="10" height="7" viewBox="0 0 10 7"><path d="M1 1.2 L5 5.2 L9 1.2" fill="none" stroke="#000" stroke-width="2"/></svg>
<div class="cb" style="left:1154px;top:1218px"></div>
<div class="cb" style="left:1293px;top:1218px"></div>
<div class="abs" style="left:1387px;top:1216px;width:82px;height:28px;background:#f5a623;border-radius:14px"></div>
<svg class="abs" style="left:1394.3px;top:1224.1px" width="14.5" height="14.5" viewBox="0 0 24 24"><path fill="#fff" d="M3 17.25V21h3.75L17.81 9.94l-3.75-3.75L3 17.25zM20.71 7.04c.39-.39.39-1.02 0-1.41l-2.34-2.34c-.39-.39-1.02-.39-1.41 0l-1.83 1.830 3.75 3.75 1.83-1.83z"/></svg>
<div class="t" style="left:1412px;top:1225.00px;font-size:11.5px;line-height:11.5px;color:#fff;letter-spacing:0.4px;-webkit-text-stroke:0.45px #fff">UTKAST</div>
<div class="t" style="left:1529.5px;top:1223.00px;font-size:13px;line-height:13px;color:#616161">Ej publicerad</div>
<svg class="abs" style="left:1773px;top:1216px" width="24" height="24" viewBox="0 0 24 24"><path fill="#666" d="M14 2H6c-1.1 0-1.99.9-1.99 2L4 20c0 1.1.89 2 1.99 2H18c1.1 0 2-.9 2-2V8l-6-6zm2 14h-3v3h-2v-3H8v-2h3v-3h2v3h3v2zm-3-7V3.5L18.5 9H13z"/></svg>
<svg class="abs" style="left:1817px;top:1216px" width="24" height="24" viewBox="0 0 24 24"><path fill="#666" d="M13 3c-4.97 0-9 4.03-9 9H1l3.89 3.89.07.14L9 12H6c0-3.870 3.13-7 7-7s7 3.13 7 7-3.13 7-7 7c-1.93 0-3.68-.79-4.94-2.06l-1.42 1.42C8.27 19.99 10.51 21 13 21c4.97 0 9-4.03 9-9s-4.03-9-9-9zm-1 5v5l4.28 2.54.72-1.21-3.5-2.08V8H12z"/></svg>
<div class="abs" style="left:335px;top:1331px;width:1530px;height:1px;background:#e0e0e0"></div>
<div class="cb" style="left:351px;top:1286px"></div>
<div class="t" style="left:423.5px;top:1290.00px;font-size:16px;line-height:16px;color:#0000ee;text-decoration:underline">Maria Svensson</div>
<div class="t" style="left:612.5px;top:1290.00px;font-size:16px;line-height:16px;color:#424242;letter-spacing:0.15px">20060415-8901</div>
<div class="t" style="left:806.5px;top:1279.00px;font-size:16px;line-height:16px;color:#424242;font-weight:bold;letter-spacing:0.1px">SV</div>
<div class="t" style="left:806.5px;top:1301.00px;font-size:13.4px;line-height:13.4px;color:#424242">Svenska</div>
<div class="abs" style="left:993px;top:1284px;width:60px;height:28px;background:#fdeceb;border:1px solid #f44336;border-radius:4px"></div>
<div class="t" style="left:1006px;top:1291.00px;font-size:14px;line-height:14px;color:#000">F</div>
<svg class="abs" style="left:1039px;top:1295px" width="10" height="7" viewBox="0 0 10 7"><path d="M1 1.2 L5 5.2 L9 1.2" fill="none" stroke="#000" stroke-width="2"/></svg>
<div class="cb" style="left:1154px;top:1286px"></div>
<div class="cb" style="left:1293px;top:1286px"></div>
<div class="abs" style="left:1387px;top:1284px;width:82px;height:28px;background:#f5a623;border-radius:14px"></div>
<svg class="abs" style="left:1394.3px;top:1292.1px" width="14.5" height="14.5" viewBox="0 0 24 24"><path fill="#fff" d="M3 17.25V21h3.75L17.81 9.94l-3.75-3.75L3 17.25zM20.71 7.04c.39-.39.39-1.02 0-1.41l-2.34-2.34c-.39-.39-1.02-.39-1.41 0l-1.83 1.830 3.75 3.75 1.83-1.83z"/></svg>
<div class="t" style="left:1412px;top:1293.00px;font-size:11.5px;line-height:11.5px;color:#fff;letter-spacing:0.4px;-webkit-text-stroke:0.45px #fff">UTKAST</div>
<div class="t" style="left:1529.5px;top:1291.00px;font-size:13px;line-height:13px;color:#616161">Ej publicerad</div>
<svg class="abs" style="left:1773px;top:1284px" width="24" height="24" viewBox="0 0 24 24"><path fill="#666" d="M14 2H6c-1.1 0-1.99.9-1.99 2L4 20c0 1.1.89 2 1.99 2H18c1.1 0 2-.9 2-2V8l-6-6zm2 14h-3v3h-2v-3H8v-2h3v-3h2v3h3v2zm-3-7V3.5L18.5 9H13z"/></svg>
<svg class="abs" style="left:1817px;top:1284px" width="24" height="24" viewBox="0 0 24 24"><path fill="#666" d="M13 3c-4.97 0-9 4.03-9 9H1l3.89 3.89.07.14L9 12H6c0-3.870 3.13-7 7-7s7 3.13 7 7-3.13 7-7 7c-1.93 0-3.68-.79-4.94-2.06l-1.42 1.42C8.27 19.99 10.51 21 13 21c4.97 0 9-4.03 9-9s-4.03-9-9-9zm-1 5v5l4.28 2.54.72-1.21-3.5-2.08V8H12z"/></svg>
<div class="abs" style="left:335px;top:1399px;width:1530px;height:1px;background:#e0e0e0"></div>
<div class="cb" style="left:351px;top:1354px"></div>
<div class="t" style="left:423.5px;top:1358.00px;font-size:16px;line-height:16px;color:#0000ee;text-decoration:underline">Maria Svensson</div>
<div class="t" style="left:612.5px;top:1358.00px;font-size:16px;line-height:16px;color:#424242;letter-spacing:0.15px">20060415-8901</div>
<div class="t" style="left:806.5px;top:1347.00px;font-size:16px;line-height:16px;color:#424242;font-weight:bold;letter-spacing:0.1px">EN</div>
<div class="t" style="left:806.5px;top:1369.00px;font-size:13.4px;line-height:13.4px;color:#424242">Engelska</div>
<div class="abs" style="left:993px;top:1352px;width:60px;height:28px;background:#fff;border:1px solid #b8b8b8;border-radius:4px"></div>
<div class="t" style="left:1006px;top:1359.00px;font-size:14px;line-height:14px;color:#000">-</div>
<svg class="abs" style="left:1039px;top:1363px" width="10" height="7" viewBox="0 0 10 7"><path d="M1 1.2 L5 5.2 L9 1.2" fill="none" stroke="#000" stroke-width="2"/></svg>
<div class="cb" style="left:1154px;top:1354px"></div>
<div class="cb" style="left:1293px;top:1354px"></div>
<div class="abs" style="left:1387px;top:1352px;width:82px;height:28px;background:#f5a623;border-radius:14px"></div>
<svg class="abs" style="left:1394.3px;top:1360.1px" width="14.5" height="14.5" viewBox="0 0 24 24"><path fill="#fff" d="M3 17.25V21h3.75L17.81 9.94l-3.75-3.75L3 17.25zM20.71 7.04c.39-.39.39-1.02 0-1.41l-2.34-2.34c-.39-.39-1.02-.39-1.41 0l-1.83 1.830 3.75 3.75 1.83-1.83z"/></svg>
<div class="t" style="left:1412px;top:1361.00px;font-size:11.5px;line-height:11.5px;color:#fff;letter-spacing:0.4px;-webkit-text-stroke:0.45px #fff">UTKAST</div>
<div class="t" style="left:1529.5px;top:1359.00px;font-size:13px;line-height:13px;color:#616161">Ej publicerad</div>
<svg class="abs" style="left:1773px;top:1352px" width="24" height="24" viewBox="0 0 24 24"><path fill="#666" d="M14 2H6c-1.1 0-1.99.9-1.99 2L4 20c0 1.1.89 2 1.99 2H18c1.1 0 2-.9 2-2V8l-6-6zm2 14h-3v3h-2v-3H8v-2h3v-3h2v3h3v2zm-3-7V3.5L18.5 9H13z"/></svg>
<svg class="abs" style="left:1817px;top:1352px" width="24" height="24" viewBox="0 0 24 24"><path fill="#666" d="M13 3c-4.97 0-9 4.03-9 9H1l3.89 3.89.07.14L9 12H6c0-3.870 3.13-7 7-7s7 3.13 7 7-3.13 7-7 7c-1.93 0-3.68-.79-4.94-2.06l-1.42 1.42C8.27 19.99 10.51 21 13 21c4.97 0 9-4.03 9-9s-4.03-9-9-9zm-1 5v5l4.28 2.54.72-1.21-3.5-2.08V8H12z"/></svg>
<div class="abs" style="left:1824px;top:984px;width:56px;height:56px;background:#73bb55;border-radius:50%;box-shadow:0 3px 6px rgba(0,0,0,.25);z-index:7"></div>
<svg class="abs" style="left:1840px;top:1000px;z-index:8" width="24" height="24" viewBox="0 0 24 24"><path fill="#fff" d="M19 13h-6v6h-2v-6H5v-2h6V5h2v6h6v2z"/></svg>
<div class="card" style="top:1432px;height:246px"></div>
<div class="abs" style="left:335px;top:1448px;width:1530px;height:214px;background:#eef1fa;border:1px solid #d5dcef;border-radius:4px"></div>
<div class="t" style="left:351.5px;top:1485.00px;font-size:20.7px;line-height:20.7px;color:#3a3a3a;-webkit-text-stroke:0.3px #3a3a3a">Information om betygsregistrering</div>
<svg class="abs" style="left:352.3px;top:1517px" width="24" height="24" viewBox="0 0 24 24"><path fill="#26408f" d="M12 2C6.48 2 2 6.48 2 12s4.48 10 10 10 10-4.48 10-10S17.52 2 12 2zm1 15h-2v-6h2v6zm0-8h-2V7h2v2z"/></svg>
<div class="t" style="left:391.5px;top:1519.00px;font-size:15px;line-height:15px;color:#333;font-weight:bold">Betygsskalor:</div>
<div class="abs" style="left:396.7px;top:1553.5px;width:4.5px;height:4.5px;background:#616161;border-radius:50%"></div><div class="t" style="left:411.5px;top:1548.00px;font-size:14px;line-height:14px;color:#616161;letter-spacing:0.08px">Grundskola/Gymnasium: A-F, -</div>
<div class="abs" style="left:396.7px;top:1577.5px;width:4.5px;height:4.5px;background:#616161;border-radius:50%"></div><div class="t" style="left:411.5px;top:1572.00px;font-size:14px;line-height:14px;color:#616161;letter-spacing:0.08px">Anpassad: A-E, -, 1 (deltagit)</div>
<div class="abs" style="left:396.7px;top:1601.5px;width:4.5px;height:4.5px;background:#616161;border-radius:50%"></div><div class="t" style="left:411.5px;top:1596.00px;font-size:14px;line-height:14px;color:#616161;letter-spacing:0.08px">Komvux/SFI: IG-G</div>
<div class="abs" style="left:396.7px;top:1625.5px;width:4.5px;height:4.5px;background:#616161;border-radius:50%"></div><div class="t" style="left:411.5px;top:1620.00px;font-size:14px;line-height:14px;color:#616161;letter-spacing:0.08px">Yrkeshögskola: IG-VG</div>
<svg class="abs" style="left:1108px;top:1517.6px" width="24" height="24" viewBox="0 0 24 24"><path fill="#26408f" d="M1 21h22L12 2 1 21zm12-3h-2v-2h2v2zm0-4h-2v-4h2v4z"/></svg>
<div class="t" style="left:1147px;top:1519.00px;font-size:15.5px;line-height:15.5px;color:#333;font-weight:bold">Viktigt att tänka på:</div>
<div class="abs" style="left:1152.7px;top:1553.5px;width:4.5px;height:4.5px;background:#616161;border-radius:50%"></div><div class="t" style="left:1167.5px;top:1548.00px;font-size:14px;line-height:14px;color:#616161;letter-spacing:0.08px">Slutbetyg kan endast sättas i åk 9 (grundskola)</div>
<div class="abs" style="left:1152.7px;top:1577.5px;width:4.5px;height:4.5px;background:#616161;border-radius:50%"></div><div class="t" style="left:1167.5px;top:1572.00px;font-size:14px;line-height:14px;color:#616161;letter-spacing:0.08px">Betyg F eller - kräver obligatorisk notering</div>
<div class="abs" style="left:1152.7px;top:1601.5px;width:4.5px;height:4.5px;background:#616161;border-radius:50%"></div><div class="t" style="left:1167.5px;top:1596.00px;font-size:14px;line-height:14px;color:#616161;letter-spacing:0.08px">Kontrollera att kurskoden är giltig enligt Skolverket</div>
</body></html>
